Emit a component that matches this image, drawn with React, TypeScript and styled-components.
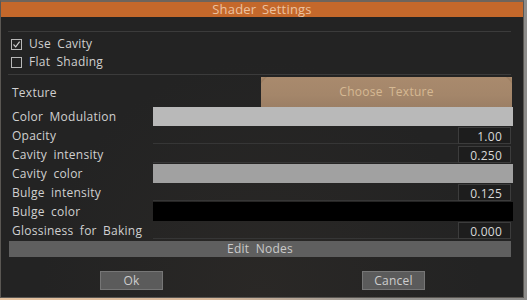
import React, { FC } from 'react';
import styled, { createGlobalStyle } from 'styled-components';

const Global = createGlobalStyle`
  html, body {
    margin: 0;
    padding: 0;
    width: 527px;
    height: 300px;
    overflow: hidden;
    background: linear-gradient(90deg, #e6c3a0 0%, #d9b89a 40%, #9a9894 70%, #8d8c8a 100%);
    font-family: "Open Sans", "DejaVu Sans", sans-serif;
  }
`;

const Window = styled.div`
  width: 522px;
  height: 295px;
  border: 1px solid #5a5753;
  border-top: 2px solid #6d645c;
  background: #252525;
  display: flex;
  flex-direction: column;
  box-sizing: content-box;
`;

const TitleBar = styled.div`
  height: 15px;
  background: #c4682b;
  color: #ecc2a0;
  font-size: 13px;
  line-height: 15px;
  text-align: center;
  word-spacing: 2px;
  letter-spacing: 0.2px;
`;

const Body = styled.div`
  flex: 1;
  display: flex;
  flex-direction: column;
  padding: 14px 10px 0 7px;
  color: #d0d0d0;
  font-size: 12px;
  letter-spacing: 0.25px;
  word-spacing: 3px;
  background: radial-gradient(ellipse at 50% 100%, #2a2826 0%, #232323 60%);
`;

const Separator = styled.div`
  height: 1px;
  background: #3b3b3b;
  margin-right: 2px;
`;

const CheckList = styled.div`
  display: flex;
  flex-direction: column;
  padding: 3px 0 3px 3px;
`;

const CheckRow = styled.label`
  display: flex;
  align-items: center;
  gap: 7px;
  height: 18px;
  line-height: 18px;
`;

const Box = styled.span`
  width: 9px;
  height: 9px;
  border: 1px solid #b8b8b8;
  display: flex;
  align-items: center;
  justify-content: center;
`;

const TextureRow = styled.div`
  display: flex;
  align-items: center;
  height: 30px;
  margin-top: 2px;
  padding-left: 4px;
`;

const Label = styled.div`
  flex: 0 0 141px;
  padding-left: 4px;
  white-space: nowrap;
`;

const TextureLabel = styled.div`
  flex: 0 0 249px;
  padding-top: 1px;
`;

const TextureButton = styled.div`
  width: 251px;
  height: 30px;
  line-height: 30px;
  text-align: center;
  color: #d6b993;
  font-size: 12px;
  background:
    radial-gradient(ellipse 140px 70px at 50% 105%, transparent 96%, rgba(90, 60, 30, 0.15) 97%, transparent 99%),
    linear-gradient(180deg, #a98a6d 0%, #a4866a 60%, #9c7f65 100%);
`;

const PropRow = styled.div`
  display: flex;
  align-items: center;
  height: 19px;
  line-height: 19px;
`;

const Swatch = styled.div<{ $color: string }>`
  flex: 1;
  height: 19px;
  background: ${p => p.$color};
`;

const NumberCell = styled.div`
  flex: 1;
  height: 19px;
  display: flex;
  align-items: center;
  padding-right: 2px;
`;

const Underline = styled.div`
  flex: 1;
  align-self: flex-end;
  height: 1px;
  margin-bottom: 1px;
  background: #363636;
`;

const ValueBox = styled.div`
  width: 53px;
  height: 17px;
  line-height: 17px;
  border: 1px solid #3c3c3c;
  background: #1d1d1d;
  text-align: right;
  padding-right: 8px;
  box-sizing: border-box;
  color: #d8d8d8;
`;

const EditNodes = styled.div`
  height: 16px;
  line-height: 16px;
  margin: 1px 2px 0 1px;
  background: #5f5f5f;
  color: #cacaca;
  text-align: center;
`;

const Buttons = styled.div`
  display: flex;
  justify-content: space-between;
  padding: 14px 88px 0 92px;
`;

const Button = styled.div`
  width: 63px;
  height: 19px;
  line-height: 18px;
  box-sizing: border-box;
  border: 1px solid #767676;
  background: #5b5b5b;
  color: #cdcdcd;
  text-align: center;
`;

const Check: FC = () => (
  <svg width="9" height="9" viewBox="0 0 9 9">
    <path d="M1.5 4.5 L3.7 6.8 L7.6 1.6" stroke="#d0d0d0" strokeWidth="1.1" fill="none" />
  </svg>
);

type Prop =
  | { label: string; kind: 'color'; color: string }
  | { label: string; kind: 'number'; value: string };

const props: Prop[] = [
  { label: 'Color Modulation', kind: 'color', color: '#b9b9b9' },
  { label: 'Opacity', kind: 'number', value: '1.00' },
  { label: 'Cavity intensity', kind: 'number', value: '0.250' },
  { label: 'Cavity color', kind: 'color', color: '#a1a1a1' },
  { label: 'Bulge intensity', kind: 'number', value: '0.125' },
  { label: 'Bulge color', kind: 'color', color: '#000000' },
  { label: 'Glossiness for Baking', kind: 'number', value: '0.000' },
];

const App: FC = () => (
  <>
    <Global />
    <Window>
      <TitleBar>Shader Settings</TitleBar>
      <Body>
        <Separator />
        <CheckList>
          <CheckRow>
            <Box><Check /></Box>
            Use Cavity
          </CheckRow>
          <CheckRow>
            <Box />
            Flat Shading
          </CheckRow>
        </CheckList>
        <Separator />
        <TextureRow>
          <TextureLabel>Texture</TextureLabel>
          <TextureButton>Choose Texture</TextureButton>
        </TextureRow>
        {props.map(p => (
          <PropRow key={p.label}>
            <Label>{p.label}</Label>
            {p.kind === 'color' ? (
              <Swatch $color={p.color} />
            ) : (
              <NumberCell>
                <Underline />
                <ValueBox>{p.value}</ValueBox>
              </NumberCell>
            )}
          </PropRow>
        ))}
        <EditNodes>Edit Nodes</EditNodes>
        <Buttons>
          <Button>Ok</Button>
          <Button>Cancel</Button>
        </Buttons>
      </Body>
    </Window>
  </>
);

export default App;
